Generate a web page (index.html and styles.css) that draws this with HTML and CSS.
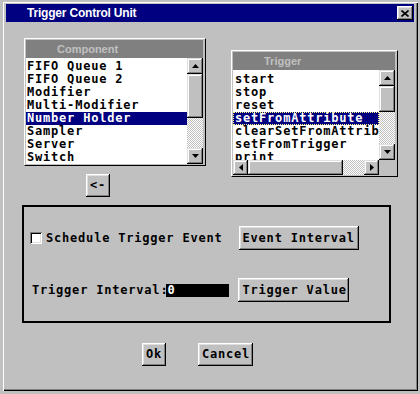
FILE: index.html
```html
<!DOCTYPE html>
<html>
<head>
<meta charset="utf-8">
<link rel="stylesheet" href="styles.css">
</head>
<body>
<div class="window">
  <div class="titlebar">
    <span class="title">Trigger Control Unit</span>
    <span class="close"><svg width="8" height="7" viewBox="0 0 8 7"><path d="M0.5 0.5L7.5 6.5M7.5 0.5L0.5 6.5" stroke="#000" stroke-width="1.6" fill="none"/></svg></span>
  </div>
  <div class="client">
    <div class="top">
      <div class="leftcol">
        <div class="listframe comp">
          <div class="lhead">Component</div>
          <div class="lbody">
            <ul class="items">
              <li>FIFO Queue 1</li>
              <li>FIFO Queue 2</li>
              <li>Modifier</li>
              <li>Multi-Modifier</li>
              <li class="sel">Number Holder</li>
              <li>Sampler</li>
              <li>Server</li>
              <li>Switch</li>
            </ul>
            <div class="vscroll">
              <div class="sbtn"><svg width="7" height="4"><path d="M3.5 0L7 4H0Z"/></svg></div>
              <div class="thumb c-thumb"></div>
              <div class="track"></div>
              <div class="sbtn"><svg width="7" height="4"><path d="M0 0H7L3.5 4Z"/></svg></div>
            </div>
          </div>
        </div>
        <button class="btn arrowbtn">&lt;-</button>
      </div>
      <div class="listframe trig">
        <div class="lhead">Trigger</div>
        <div class="lbody tbody">
          <ul class="items titems">
            <li>start</li>
            <li>stop</li>
            <li>reset</li>
            <li class="sel focus">setFromAttribute</li>
            <li>clearSetFromAttribute</li>
            <li>setFromTrigger</li>
            <li>print</li>
          </ul>
          <div class="vscroll">
            <div class="sbtn"><svg width="7" height="4"><path d="M3.5 0L7 4H0Z"/></svg></div>
            <div class="thumb t-thumb"></div>
            <div class="track"></div>
            <div class="sbtn"><svg width="7" height="4"><path d="M0 0H7L3.5 4Z"/></svg></div>
          </div>
        </div>
        <div class="hrow">
          <div class="hscroll">
            <div class="sbtn hbtn"><svg width="4" height="7"><path d="M0 3.5L4 0V7Z"/></svg></div>
            <div class="thumb h-thumb"></div>
            <div class="track"></div>
            <div class="sbtn hbtn"><svg width="4" height="7"><path d="M0 0L4 3.5L0 7Z"/></svg></div>
          </div>
          <div class="corner"></div>
        </div>
      </div>
    </div>
    <div class="group">
      <div class="grow r1">
        <span class="check"></span>
        <span class="txt lbl1">Schedule Trigger Event</span>
        <button class="btn b1">Event Interval</button>
      </div>
      <div class="grow r2">
        <span class="txt lbl2">Trigger Interval:</span>
        <span class="field">0</span>
        <button class="btn b2">Trigger Value</button>
      </div>
    </div>
    <div class="actions">
      <button class="btn okbtn">Ok</button>
      <button class="btn cancelbtn">Cancel</button>
    </div>
  </div>
</div>
</body>
</html>
```
FILE: styles.css
```css
* { box-sizing: border-box; }
html, body { margin: 0; padding: 0; }
body {
  width: 420px;
  height: 394px;
  background: #c0c0c0;
  overflow: hidden;
  font-family: "DejaVu Sans Mono", monospace;
}
.window {
  margin: 2px 0 0 3px;
  width: 415px;
  height: 389px;
  background: #c0c0c0;
  padding: 2px 4px 0 3px;
  box-shadow: inset 1px 1px #fff, inset -1px -1px #000, inset -2px -2px #808080;
}
.titlebar {
  display: flex;
  align-items: center;
  height: 18px;
  background: #000080;
  padding-left: 21px;
  padding-right: 1px;
}
.title {
  flex: 1;
  color: #fff;
  font: bold 12px "Liberation Sans", Arial, sans-serif;
  letter-spacing: -0.2px;
}
.close {
  width: 16px;
  height: 14px;
  background: #c0c0c0;
  display: flex;
  align-items: center;
  justify-content: center;
  box-shadow: inset -1px -1px #000, inset 1px 1px #fff, inset -2px -2px #808080, inset 2px 2px #dfdfdf;
}
.top { display: flex; align-items: flex-start; }
.leftcol { margin-left: 18px; margin-top: 16px; display: flex; flex-direction: column; align-items: flex-start; }
.listframe {
  border: 1px solid;
  border-color: #fff #000 #000 #fff;
  padding: 1px 2px 1px 1px;
  background: #c0c0c0;
}
.comp { width: 182px; }
.trig { width: 167px; margin-left: 25px; margin-top: 28px; }
.lhead {
  height: 18px;
  background: #808080;
  color: #c0c0c0;
  font: bold 11px/18px "Liberation Sans", Arial, sans-serif;
  padding-left: 31px;
}
.lbody { display: flex; height: 106px; }
.tbody { height: 90px; }
.items {
  list-style: none;
  margin: 0;
  padding: 2px 0 0 0;
  flex: 1;
  background: #fff;
  overflow: hidden;
  font-weight: bold;
  font-size: 12px;
  line-height: 13px;
  letter-spacing: 0.8px;
  color: #000;
}
.titems { padding-top: 3px; }
.items li { height: 13px; padding-left: 1px; white-space: nowrap; }
.titems li { padding-left: 2px; }
.items li.sel { background: #000080; color: #fff; }
.items li.focus { outline: 1px dotted #ffff80; outline-offset: -1px; }
.vscroll { width: 16px; display: flex; flex-direction: column; }
.sbtn {
  height: 16px;
  flex: none;
  background: #c0c0c0;
  display: flex;
  align-items: center;
  justify-content: center;
  box-shadow: inset -1px -1px #000, inset 1px 1px #dfdfdf, inset -2px -2px #808080, inset 2px 2px #fff;
}
.sbtn svg path { fill: #000; }
.thumb {
  flex: none;
  background: #c0c0c0;
  box-shadow: inset -1px -1px #000, inset 1px 1px #dfdfdf, inset -2px -2px #808080, inset 2px 2px #fff;
}
.c-thumb { height: 44px; }
.t-thumb { height: 26px; }
.track {
  flex: 1;
  background: repeating-conic-gradient(#c0c0c0 0 25%, #fff 0 50%) 0 0 / 2px 2px;
}
.hrow { display: flex; height: 15px; }
.hscroll { flex: 1; display: flex; }
.hbtn { width: 15px; height: 15px; }
.h-thumb { width: 95px; }
.corner { width: 16px; background: #c0c0c0; }
.btn {
  font-family: "DejaVu Sans Mono", monospace;
  font-weight: bold;
  font-size: 12px;
  letter-spacing: 0.8px;
  color: #000;
  background: #c0c0c0;
  border: 0;
  margin: 0;
  padding: 0 3px 0 4px;
  height: 24px;
  line-height: 24px;
  text-align: left;
  box-shadow: inset -1px -1px #000, inset 1px 1px #fff, inset -2px -2px #808080, inset 2px 2px #dfdfdf;
  white-space: nowrap;
}
.arrowbtn { margin-left: 62px; margin-top: 8px; height: 23px; line-height: 23px; width: 24px; }
.group {
  margin-left: 16px;
  margin-top: 8px;
  width: 369px;
  height: 118px;
  border: 2px solid #000;
  padding-top: 19px;
}
.grow { display: flex; align-items: center; height: 24px; }
.r2 { margin-top: 28px; }
.check {
  width: 12px;
  height: 12px;
  margin-left: 6px;
  background: #fff;
  box-shadow: inset 1px 1px #808080, inset -1px -1px #fff, inset 2px 2px #000, inset -2px -2px #dfdfdf;
}
.txt {
  font-weight: bold;
  font-size: 12px;
  letter-spacing: 0.8px;
  white-space: nowrap;
}
.lbl1 { margin-left: 4px; }
.b1 { margin-left: 16px; width: 120px; }
.lbl2 { margin-left: 8px; }
.field {
  margin-left: -2px;
  width: 63px;
  height: 13px;
  background: #000;
  color: #fff;
  font-weight: bold;
  font-size: 12px;
  line-height: 13px;
  padding-left: 1px;
}
.b2 { margin-left: 9px; width: 111px; }
.actions { display: flex; margin-top: 20px; padding-left: 136px; }
.okbtn { width: 24px; height: 23px; line-height: 23px; }
.cancelbtn { margin-left: 32px; width: 55px; height: 23px; line-height: 23px; }
```
